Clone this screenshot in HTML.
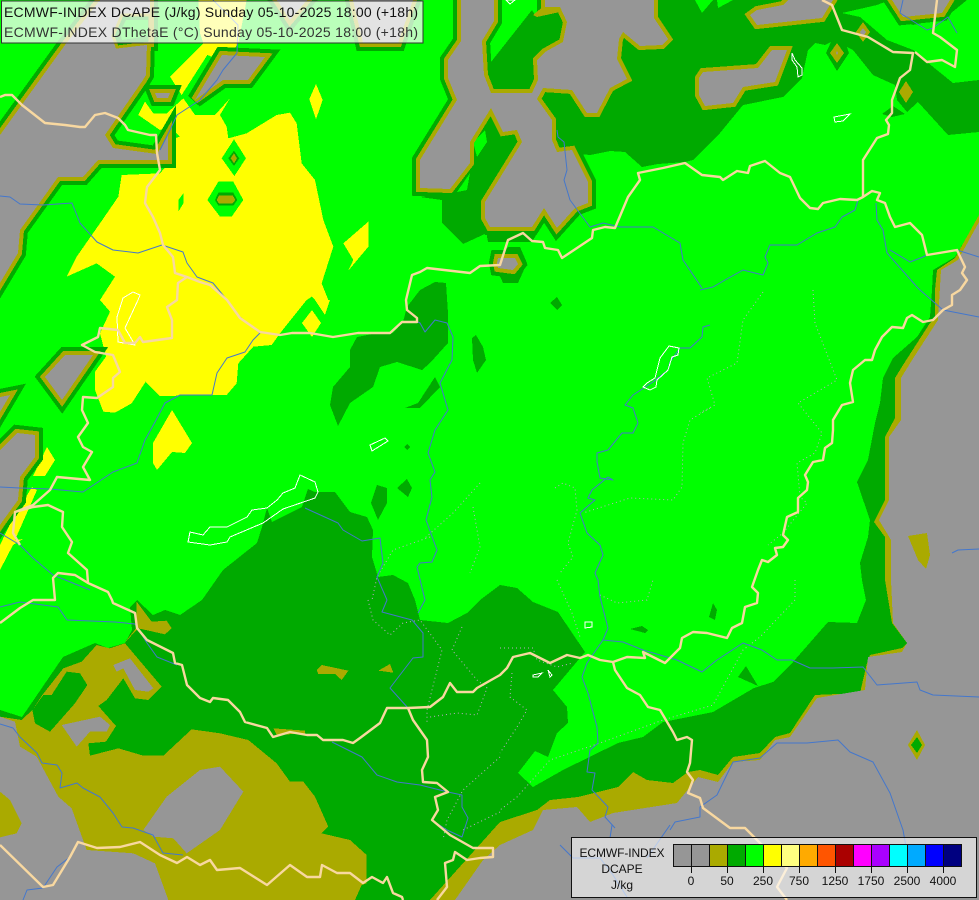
<!DOCTYPE html>
<html><head><meta charset="utf-8"><title>ECMWF-INDEX DCAPE</title>
<style>html,body{margin:0;padding:0;background:#0f0;overflow:hidden}svg{display:block}text{font-family:"Liberation Sans",sans-serif}</style></head>
<body>
<svg xmlns="http://www.w3.org/2000/svg" width="979" height="900" viewBox="0 0 979 900">
<defs>
<path id="rg" d="M461 0L494 0L494 21L482 41L484 75L491 93L532 93L538 80L537 60L545 52L563 42L567 22L560 7L545 7L545 0L654 0L654 18L668 39L662 45L640 46L623 32L619 39L617 59L627 79L610 88L597 113L587 113L572 90L543 88L537 99L552 120L552 140L557 152L572 150L588 182L588 203L575 208L557 228L544 208L532 227L490 227L485 218L485 202L522 142L517 130L503 132L491 108L470 142L470 163L450 189L420 188L420 160L457 100L448 78L448 60L461 41Z
M750 15L757 10L783 5L788 0L833 0L822 18L757 25Z
M699 78L703 72L758 68L772 50L787 50L775 82L743 87L733 103L705 106L699 95Z
M892 0L950 0L942 13L903 17Z
M497 263L498 258L515 258L518 264L513 270L498 268Z
M0 135L65 45L100 0L150 0L150 43L147 43L146 75L143 80L105 135L113 148L157 154L168 135L168 160L98 160L83 177L58 177L20 230L18 253L0 283Z
M155 93L170 93L168 98L157 98Z
M222 55L265 57L248 80L223 80L195 100Z
M353 0L413 0L398 43L363 43Z
M277 0L307 0L290 20Z
M45 377L65 355L93 355L62 400Z
M0 397L10 395L0 412Z
M0 450L3 447L17 433L35 435L35 457L20 477L18 500L2 522L0 525Z"/>
</defs>
<rect width="979" height="900" fill="#00ff00"/>
<g shape-rendering="crispEdges">
<!-- yellow -->
<g fill="#ffff00">
<g transform="scale(.33333)">
<path d="M415 345L435 305L460 340L500 340L550 295L585 345L645 345L690 295L660 345L680 380L685 415L740 400L830 345L870 338L890 370L905 490L945 540L970 660L1000 740L965 850L985 900L975 945L945 900L935 890L920 900L840 1000L815 1035L760 1040L715 1090L710 1150L680 1185L480 1188L437 1145L395 1210L345 1238L310 1235L285 1170L285 1115L318 1070L300 1000L330 935L300 900L345 830L290 790L200 830L230 770L300 670L355 590L365 525L480 520L515 480L510 420L540 410L510 380L480 390Z"/>
<path d="M510 230L610 130L600 100L595 0L740 0L715 130L700 150L660 150L635 170L622 165L545 285Z"/>
<path d="M928 297L948 252L968 300L948 358Z"/>
<path d="M1030 730L1105 665L1105 740L1045 812L1060 780Z"/>
</g>
<path d="M172 410L192 443L185 453L172 452L157 470L153 463L153 443Z"/>
<path d="M47 447L55 460L45 476L33 476Z"/>
<path d="M32 487L37 490L15 540L23 539L13 545L0 570L0 545L12 520Z"/>
<path d="M312 310L321 323L312 337L302 323Z"/>
<path d="M315 300L330 300L325 315Z"/>
</g>
<g transform="scale(.33333)">
<path fill="#00ff00" d="M665 475L702 418L738 475L703 528Z"/>
<path fill="#00aa00" d="M685 475L702 452L718 475L702 498Z"/>
<path fill="#aaaa00" d="M692 475L702 460L711 475L702 490Z"/>
<path fill="#00ff00" d="M622 600L655 545L700 545L730 600L695 650L660 650Z"/>
<path fill="#00aa00" d="M645 600L655 578L700 578L712 600L700 617L655 617Z"/>
<path fill="#aaaa00" d="M650 600L657 586L698 586L706 600L698 610L657 610Z"/>
<path fill="#00ff00" d="M535 600L550 580L550 610L535 635Z"/>
</g>
<!-- dark green -->
<g fill="#00aa00">
<path d="M0 710L22 717L63 657L95 643L108 648L125 643L132 630L130 607L137 600L153 615L165 610L180 615L202 600L223 570L257 543L262 527L267 508L272 522L302 507L308 489L315 492L335 492L350 512L367 517L373 530L372 557L378 577L393 575L408 583L415 600L420 620L448 623L467 613L480 600L500 585L517 588L533 602L558 612L585 652L553 690L567 707L568 723L557 733L548 757L535 751L518 773L533 787L563 770L618 743L643 737L663 722L713 712L754 688L773 682L793 662L828 622L857 623L866 600L862 580L860 563L868 537L870 520L857 482L868 460L875 423L880 403L883 378L893 358L917 337L930 317L932 290L933 270L955 257L979 217L979 900L0 900Z"/>
<path d="M579 154L590 155L610 151L625 152L642 167L658 164L685 162L693 160L720 133L743 105L783 97L802 78L808 50L815 43L825 45L831 42L826 53L837 71L849 53L847 47L853 50L873 75L895 85L897 100L907 112L918 102L948 135L979 132L979 80L953 83L927 62L913 50L887 40L860 17L842 13L877 5L890 0L733 0L718 8L717 0L713 0L702 13L695 0L654 0L600 40L540 90L545 140L560 150Z"/>
<path d="M882 114L893 106L905 114L892 117Z"/>
<path d="M950 0L967 0L945 18L913 25L900 20L892 0Z"/>
<path d="M491 78L491 62L532 10L535 15L560 10L563 40L537 60L537 85L490 90Z"/>
<path d="M491 108L503 132L522 142L485 202L483 220L487 233L463 244L442 223L442 200L420 197L450 192L470 163L470 140Z"/>
<path d="M485 225L488 242L532 242L544 222L557 240L572 220Z"/>
<path d="M495 265L508 247L520 247L527 263L518 283L503 283Z"/>
<path d="M420 290L435 282L446 283L448 313L448 343L430 363L422 370L397 362L380 367L373 387L350 403L338 426L330 405L333 387L350 367L350 350L357 337L377 333L393 333L403 322L407 307Z"/>
<path d="M405 408L418 403L435 377L440 387L420 408Z"/>
<path d="M472 338L476 335L483 347L486 360L477 373L473 360Z"/>
<path d="M550 303L557 297L562 305L557 310Z"/>
<path d="M397 488L407 479L412 488L408 497Z"/>
<path d="M377 485L387 488L387 503L378 520L371 503Z"/>
<path d="M404 447L407 444L410 447L407 450Z"/>
<path d="M713 603L717 610L715 620L709 617Z"/>
<path d="M630 629L642 626L648 630L645 633Z"/>
<path d="M746 666L758 686L738 677Z"/>
</g>
<!-- green sub-contour ring then olive ring then grey -->
<use href="#rg" fill="#00aa00" stroke="#00aa00" stroke-width="16"/>
<g fill="#00ff00">
<path d="M473 142L485 130L487 142L477 157Z"/>
<path d="M457 192L470 173L467 190Z"/>
</g>
<use href="#rg" fill="#aaaa00" stroke="#aaaa00" stroke-width="8"/>
<path fill="#aaaa00" d="M533 15L545 5L560 5L560 12L537 17Z"/>
<use href="#rg" fill="#969696"/>
<!-- hole under title -->
<path fill="#00aa00" stroke="#aaaa00" stroke-width="3" d="M113 36L122 15L150 15L150 43L117 47Z"/>
<path fill="#00ff00" d="M120 32L126 20L148 20L148 36L122 40Z"/>
<!-- SE olive + grey -->
<path fill="#aaaa00" d="M430 900L500 822L537 810L550 800L578 797L618 787L633 772L647 780L673 783L688 772L700 770L718 775L733 757L760 753L775 737L790 733L815 695L860 693L867 663L870 655L902 648L907 643L892 623L885 580L885 537L874 522L885 500L885 437L895 418L895 378L903 365L930 323L935 318L935 290L937 270L955 258L979 215L979 900Z"/>
<path fill="#969696" d="M979 222L958 260L941 270L938 320L914 357L901 378L901 420L889 437L889 500L879 520L891 540L891 580L893 623L907 643L902 652L868 657L865 690L817 698L790 737L775 740L760 760L733 762L718 782L698 777L677 803L613 813L590 822L577 807L543 810L533 830L500 845L483 860L455 900L979 900Z"/>
<path fill="#aaaa00" d="M908 536L927 533L930 555L926 569L918 560Z"/>
<path fill="#aaaa00" d="M917 730L925 745L917 760L908 745Z"/>
<path fill="#00aa00" d="M917 737L922 745L917 753L911 745Z"/>
<!-- diamonds -->
<path fill="#aaaa00" d="M863 22L870 32L863 42L856 32Z"/>
<path fill="#969696" d="M863 28L866 32L863 37L860 32Z"/>
<path fill="#aaaa00" d="M837 43L844 53L837 63L830 53Z"/>
<path fill="#969696" d="M837 51L838 53L837 55L836 53Z"/>
<path fill="#aaaa00" d="M906 81L913 92L906 103L899 92Z"/>
<!-- SW olive -->
<g transform="translate(0 600) scale(.33333)">
<path fill="#aaaa00" d="M0 350L65 360L97 330L127 285L190 205L245 185L290 135L330 145L375 130L485 260L445 300L405 295L370 235L320 300L295 318L348 378L318 425L265 430L270 467L355 445L430 467L490 467L575 388L660 400L745 420L830 490L870 545L910 545L945 590L985 680L965 700L1050 720L1100 765L1100 850L1085 855L1065 900L0 900Z"/>
<path fill="#00aa00" d="M97 330L130 285L155 285L200 215L240 220L262 255L225 310L150 395L105 370Z"/>
<g fill="#969696">
<path d="M340 195L390 175L460 265L445 275L405 270L370 205L350 215Z"/>
<path d="M185 375L300 350L330 375L320 395L270 395L230 440Z"/>
<path d="M0 350L45 365L60 440L110 470L175 590L215 625L260 750L400 760L465 790L505 900L0 900Z"/>
<path d="M430 690L500 590L600 510L660 500L730 575L660 690L560 760L520 715L460 710Z"/>
</g>
<g fill="#aaaa00">
<path d="M0 575L30 600L65 670L50 700L0 712Z"/>
<path d="M950 210L965 195L1045 212L1025 240L1005 222L955 222Z"/>
<path d="M1135 212L1170 192L1180 218Z"/>
<path d="M410 5L455 65L500 62L515 85L495 103L415 85L372 130L408 85Z"/>
<path d="M820 385L915 392L915 400L830 405Z"/>
</g>
</g>
</g>
<!-- dotted boundaries -->
<g fill="none" stroke="#c0a8c8" stroke-width="1" stroke-dasharray="1 3">
<path d="M763 292L743 320L737 363L707 378L715 405L700 413"/>
<path d="M813 290L815 323L837 380L798 403L822 433L815 453L797 463L800 497L807 503L783 533L768 545"/>
<path d="M710 408L690 420L683 443L682 487L673 500L630 498L583 513"/>
<path d="M555 488L563 483L575 488L577 510L568 543L573 557L560 573"/>
<path d="M480 483L453 513L425 538"/>
<path d="M473 507L480 547L470 573"/>
<path d="M795 580L795 600L760 637L743 650L713 705L663 720L600 743L550 760L517 797L500 810"/>
<path d="M557 580L572 613L580 637"/>
<path d="M600 595L617 603L647 600L653 580"/>
<path d="M500 648L533 648L537 660L557 667L573 663"/>
<path d="M512 673L510 697L527 710L517 727L500 753"/>
<path d="M368 600L373 620L390 635L403 623L420 620L442 650L427 710L427 722"/>
<path d="M462 627L452 650L477 680L487 688L477 715L457 713L430 717"/>
<path d="M500 757L463 790L447 820L443 840"/>
<path d="M500 812L463 830"/>
<path d="M430 537L393 550L377 577L372 600"/>
</g>
<!-- rivers -->
<g fill="none" stroke="#4477cc" stroke-width="1" stroke-linejoin="round">
<path d="M0 196L10 197L20 204L43 205L72 203L80 223L97 242L113 250L138 253L162 245L183 252L187 263L197 277L213 283L227 300L240 317L260 333L253 340L245 352L227 358L217 373L212 395L180 395L165 403L155 422L145 440L137 463L113 472L83 492L50 489L20 488L0 487"/>
<path d="M213 0L238 25L237 53L223 70L217 80L200 100L177 115L170 130L160 150"/>
<path d="M305 508L338 523L343 530L362 541L380 538L383 563L377 577L387 600"/>
<path d="M0 533L20 545L33 558L53 575L90 590"/>
<path d="M0 607L20 602L58 607L67 620L115 622L135 624L147 643L157 657L177 665"/>
<path d="M387 600L382 612L412 620L423 633L423 657L413 658L390 688L408 708"/>
<path d="M418 322L420 323L425 332L435 320L447 323L453 337L452 360L440 383L448 410L435 430L428 453L435 472L430 480L432 497L426 520L437 550L432 562L420 563L417 567L425 600L418 613"/>
<path d="M557 130L558 137L564 142L567 170L564 180L570 200L590 227L603 223L620 227L653 227L680 243L683 260L702 288"/>
<path d="M700 290L713 287L725 280L743 270L763 275L768 263L765 257L770 245L797 245L817 233L835 227L842 217L855 210L858 200"/>
<path d="M876 203L877 220L883 230L887 253L917 287L920 290L943 310L979 317"/>
<path d="M890 250L910 262L923 257L927 255"/>
<path d="M957 250L979 257"/>
<path d="M903 0L900 13L927 30L933 28L948 17L957 33"/>
<path d="M710 325L703 327L702 337L690 348L680 348L670 362L668 370L653 382L633 395L625 405L633 408L638 423L633 433L622 433L608 450L597 453L597 462L600 478L613 480L608 477L592 490L588 498L595 500L580 513L587 533L600 545L603 555L595 573L598 580L600 597L608 628L603 640L587 663L582 677L588 693L597 727L598 743L590 750L587 772L595 773L592 790L608 807L605 817L615 828"/>
<path d="M603 640L623 642L643 650L677 660L702 672L717 660L743 643L762 650L777 660L792 660L810 668L833 668L863 667L877 685L917 682L920 690L933 695L979 697"/>
<path d="M670 830L675 822L700 817L700 807L717 795L733 762L760 758L777 743L807 743L838 740L850 752L873 762L890 793L903 830L907 852"/>
<path d="M612 825L610 838M560 845L573 858L600 858L613 875L627 897M670 825L647 858"/>
<path d="M952 553L958 550L979 549"/>
<path d="M0 724L13 728L20 737L37 753L42 763L57 765L62 773L60 788L77 783L83 788L100 797L113 813L122 827L133 828L153 835L163 853L183 855"/>
<path d="M23 900L27 890L43 888L57 867L70 857"/>
<path d="M332 742L362 757L377 775L397 782L420 785L448 792L462 795L462 807L468 818L462 837L447 830L432 820"/>
</g>
<!-- lakes -->
<g fill="none" stroke="#ffffff" stroke-width="1" shape-rendering="crispEdges">
<path d="M190 532L203 535L210 527L227 527L237 522L247 517L252 510L267 508L277 500L283 493L295 488L300 475L315 482L318 492L315 498L283 509L263 523L230 537L227 542L210 545L188 542Z"/>
<path d="M370 445L385 438L388 441L372 451Z"/>
<path d="M123 298L133 292L140 295L138 300L125 328L135 345L118 342L117 317Z"/>
<path d="M792 53L795 60L802 68L802 75L798 77L797 67L792 60Z"/>
<path d="M834 117L850 114L843 121L835 122Z"/>
<path d="M669 346L679 348L678 355L672 357L668 370L657 380L656 387L650 390L643 387L647 383L655 378L660 358Z"/>
<path d="M585 622L592 622L592 627L585 628Z"/>
<path d="M533 675L542 673L538 677L533 677Z"/>
<path d="M548 670L552 675L550 677Z"/>
<path d="M506 0L515 0L510 4Z"/>
</g>
<!-- borders -->
<g fill="none" stroke="#f8d8a0" stroke-width="2.4" stroke-linejoin="round">
<path d="M0 97L5 95L12 95L22 105L45 123L65 125L80 127L85 127L95 115L105 113L118 118L125 125L128 130L150 135L156 135L157 153L160 170L147 187L145 203L153 217L160 233L163 245L173 257L175 273L187 277L178 283L177 300L167 307L172 320L172 338L143 342L140 337L135 343L125 343L118 330L100 328L98 337L82 345L95 352L113 355L120 372L113 378L113 387L97 398L83 397L82 410L88 423L78 437L83 447L92 452L83 467L90 480L57 477L50 490L33 505L15 512L13 533L20 545"/>
<path d="M187 277L200 282L210 285L227 300L240 318L260 332L280 335L292 333L310 333L333 337L358 333L367 333L390 333L402 322L417 322L417 318L407 310L406 300L412 275L420 272L427 268L470 273L480 266L500 265L508 240L523 233L532 241L543 242L545 248L558 250L562 258L577 248L592 238L593 230L605 227L615 228L628 197L640 180L638 173L663 168L685 163L702 175L720 177L723 180L737 171L748 173L750 166L765 161L780 173L790 177L800 198L810 208L818 209L823 203L840 199L857 200L863 197L863 160L877 138L888 134L889 125L886 120L892 113L892 100L900 78L910 70L913 53L893 52L868 37L842 30L832 5L822 0"/>
<path d="M915 52L927 62L942 60L955 67L957 50L940 37L933 33L937 0"/>
<path d="M863 197L872 191L880 193L877 200L885 203L890 217L895 227L910 223L922 235L927 255L957 250L965 267L962 273L967 280L960 290L952 295L952 305L943 310L933 320L923 322L912 315L907 318L903 328L892 327L882 337L875 350L872 360L865 360L853 370L850 383L853 402L842 405L833 420L833 430L832 443L825 448L823 460L813 462L805 475L808 482L807 490L798 498L798 512L787 517L783 535L788 540L783 547L775 548L777 555L768 562L762 560L758 570L752 587L758 593L757 603L745 607L742 623L732 628L727 638L707 633L693 632L682 638L680 648L665 663L643 652L645 658L627 657L613 662L600 660L588 655L580 658L567 655L550 663L530 653L513 657L507 668L500 675L477 688L473 692L457 692L450 683L443 697L430 707L408 708L387 708L380 723L360 738L353 743L343 740L323 740L317 735L307 735L290 732L273 737L267 728L245 722L240 712L228 700L213 698L210 702L200 698L187 685L182 665L175 663L173 653L147 640L137 628L135 613L113 603L112 600L108 592L88 583L87 570L68 553L72 542L62 527L63 512L48 505L33 507L15 512"/>
<path d="M0 623L20 608L33 600L55 600L53 578L58 573L75 575L88 583"/>
<path d="M613 662L615 670L627 688L640 695L648 707L660 710L673 732L677 740L687 737L692 740L690 763L687 772L693 780L688 793L700 798L703 808L730 828L745 828L760 843L787 868L777 887L787 900"/>
<path d="M408 708L413 720L427 740L428 757L422 770L423 782L437 783L448 792L435 797L438 810L432 820L450 835L473 848L493 848L493 857L480 858L467 860L455 852L453 860L445 863L447 887L437 900"/>
<path d="M0 845L43 887L53 885L70 857L78 842L97 848L120 847L140 842L160 855L177 863L187 857L200 865L210 860L217 870L240 868L267 885L290 865L307 877L320 877L322 865L337 873L350 873L363 883L372 877L383 883L387 877L393 893L402 897L403 900"/>
</g>
<!-- title box -->
<rect x="1.5" y="1" width="421.5" height="42" fill="#ffffff" fill-opacity=".73" stroke="#333" stroke-width="1" shape-rendering="crispEdges"/>
<text x="4" y="17" font-size="14" fill="#111" textLength="414" lengthAdjust="spacing">ECMWF-INDEX DCAPE (J/kg) Sunday 05-10-2025 18:00 (+18h)</text>
<text x="4" y="37" font-size="14" fill="#333" textLength="414" lengthAdjust="spacing">ECMWF-INDEX DThetaE (°C) Sunday 05-10-2025 18:00 (+18h)</text>
<!-- colour legend -->
<rect x="571.5" y="837.5" width="405" height="60" fill="#ffffff" fill-opacity=".6" stroke="#111" stroke-width="1" shape-rendering="crispEdges"/>
<g shape-rendering="crispEdges" stroke="#111" stroke-width="1">
<rect x="673.5" y="844.5" width="18" height="22" fill="#969696"/>
<rect x="691.5" y="844.5" width="18" height="22" fill="#969696"/>
<rect x="709.5" y="844.5" width="18" height="22" fill="#aaaa00"/>
<rect x="727.5" y="844.5" width="18" height="22" fill="#00aa00"/>
<rect x="745.5" y="844.5" width="18" height="22" fill="#00ff00"/>
<rect x="763.5" y="844.5" width="18" height="22" fill="#ffff00"/>
<rect x="781.5" y="844.5" width="18" height="22" fill="#ffff80"/>
<rect x="799.5" y="844.5" width="18" height="22" fill="#ffaa00"/>
<rect x="817.5" y="844.5" width="18" height="22" fill="#ff5500"/>
<rect x="835.5" y="844.5" width="18" height="22" fill="#aa0000"/>
<rect x="853.5" y="844.5" width="18" height="22" fill="#ff00ff"/>
<rect x="871.5" y="844.5" width="18" height="22" fill="#aa00ff"/>
<rect x="889.5" y="844.5" width="18" height="22" fill="#00ffff"/>
<rect x="907.5" y="844.5" width="18" height="22" fill="#00aaff"/>
<rect x="925.5" y="844.5" width="18" height="22" fill="#0000ff"/>
<rect x="943.5" y="844.5" width="18" height="22" fill="#000080"/>
<path fill="none" d="M691.5 867V873M727.5 867V873M763.5 867V873M799.5 867V873M835.5 867V873M871.5 867V873M907.5 867V873M943.5 867V873"/>
</g>
<g font-size="12" fill="#111" text-anchor="middle">
<text x="622" y="857" textLength="85" lengthAdjust="spacing">ECMWF-INDEX</text>
<text x="622" y="873">DCAPE</text>
<text x="622" y="889">J/kg</text>
<text x="691" y="885">0</text>
<text x="727" y="885">50</text>
<text x="763" y="885">250</text>
<text x="799" y="885">750</text>
<text x="835" y="885">1250</text>
<text x="871" y="885">1750</text>
<text x="907" y="885">2500</text>
<text x="943" y="885">4000</text>
</g>
</svg>
</body></html>
